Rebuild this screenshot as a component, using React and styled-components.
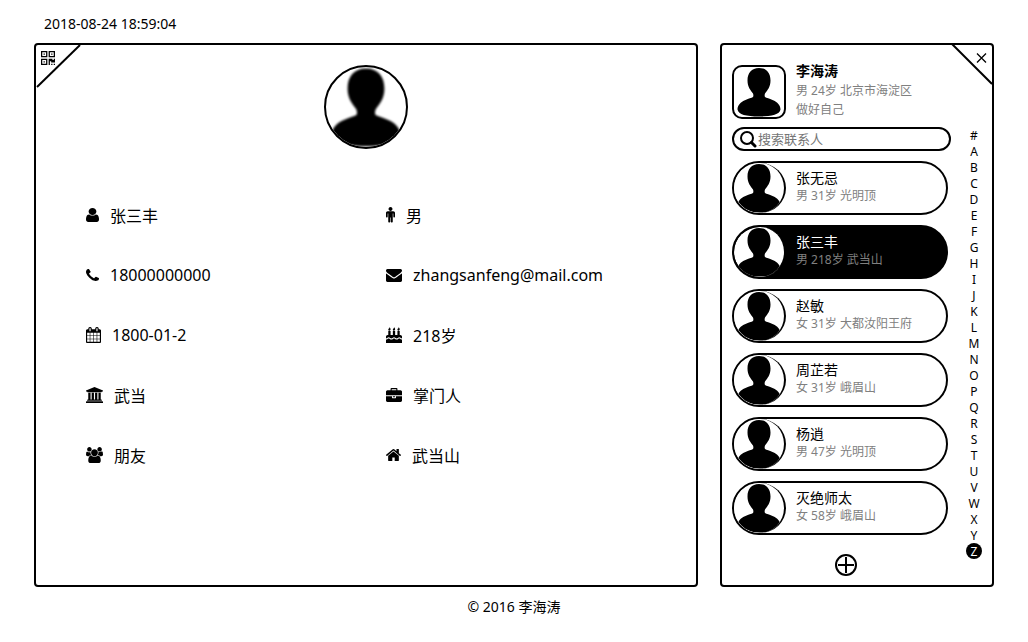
import React, { useState } from "react";
import styled, { createGlobalStyle } from "styled-components";

const GlobalStyle = createGlobalStyle`
  *, *::before, *::after { box-sizing: border-box; }
  body {
    margin: 0;
    background: #fff;
    color: #000;
    font-family: "Noto Sans", "Noto Sans CJK SC", sans-serif;
    font-size: 14px;
  }
  button, input { font: inherit; color: inherit; }
  ul { list-style: none; margin: 0; padding: 0; }
`;

const Page = styled.div`
  max-width: 1028px;
  margin: 0 auto;
  padding: 0 34px;
`;

const Header = styled.header`
  padding: 14px 10px 9px;
  line-height: 20px;
`;

const Columns = styled.main`
  display: grid;
  grid-template-columns: minmax(0, 1fr) 274px;
  gap: 22px;
`;

const Panel = styled.section`
  position: relative;
  border: 2px solid #000;
  border-radius: 4px;
`;

const DetailPanel = styled(Panel)`
  padding: 20px 10px 20px 50px;
`;

const SidePanel = styled(Panel)`
  display: grid;
  grid-template-columns: minmax(0, 1fr) 28px;
  padding: 20px 4px 9px 10px;
`;

const CornerButton = styled.button`
  position: absolute;
  top: 0;
  ${(p) => (p.$side === "left" ? "left: 0;" : "right: 0;")}
  display: block;
  padding: 0;
  border: 0;
  background: none;
  cursor: pointer;

  svg { display: block; }
`;

const Portrait = styled.svg`
  display: block;
  flex: none;
  width: ${(p) => p.$size}px;
  height: ${(p) => p.$size}px;
  border: 2px solid #000;
  border-radius: ${(p) => (p.$round ? "50%" : "10px")};
  background: #fff;
`;

const PillPortrait = styled.svg`
  display: block;
  flex: none;
  width: 52px;
  height: 50px;
  border-right: 2px solid #000;
  border-radius: 50%;
  background: #fff;
`;

const PortraitRow = styled.div`
  display: flex;
  justify-content: center;
  padding-right: 40px;
  margin-bottom: 36px;
`;

const Facts = styled.ul`
  display: grid;
  grid-template-columns: 1fr 1fr;
`;

const Fact = styled.li`
  display: flex;
  align-items: center;
  gap: 11px;
  height: 60px;
  font-size: 16px;
`;

const Profile = styled.div`
  display: flex;
  gap: 10px;
  margin-bottom: 8px;
`;

const ProfileText = styled.div`
  margin-top: -4px;
`;

const ProfileName = styled.h2`
  margin: 0;
  font-size: 14px;
  line-height: 20px;
  font-weight: 700;
`;

const Muted = styled.div`
  color: #808080;
  font-size: 12px;
  line-height: ${(p) => (p.$loose ? "19px" : "16px")};
`;

const Search = styled.label`
  display: flex;
  align-items: center;
  gap: 1px;
  height: 24px;
  margin: 0 9px 10px 0;
  padding-left: 5px;
  border: 2px solid #000;
  border-radius: 12px;

  svg { flex: none; }
`;

const SearchInput = styled.input`
  flex: 1;
  min-width: 0;
  height: 20px;
  padding: 0;
  border: 0;
  outline: 0;
  background: none;
  font-size: 13px;

  &::placeholder { color: #757575; opacity: 1; }
`;

const ContactList = styled.ul`
  display: grid;
  gap: 10px;
  margin: 0 12px 19px 0;
`;

const ContactButton = styled.button`
  display: flex;
  align-items: center;
  gap: 10px;
  width: 100%;
  height: 54px;
  padding: 0;
  overflow: hidden;
  border: 2px solid #000;
  border-radius: 27px;
  background: ${(p) => (p.$active ? "#000" : "#fff")};
  color: ${(p) => (p.$active ? "#fff" : "#000")};
  text-align: left;
  cursor: pointer;
`;

const ContactText = styled.div`
  padding-bottom: 4px;
`;

const ContactName = styled.div`
  font-size: 14px;
  line-height: 20px;
`;

const AddButton = styled.button`
  display: block;
  width: 22px;
  height: 22px;
  margin: 0 auto;
  padding: 0;
  border: 0;
  background: none;
  cursor: pointer;

  svg { display: block; }
`;

const Letters = styled.nav`
  display: flex;
  flex-direction: column;
  align-items: center;
  padding-top: 62px;
`;

const Letter = styled.a`
  width: 16px;
  height: 16px;
  border-radius: 50%;
  background: ${(p) => (p.$active ? "#000" : "none")};
  color: ${(p) => (p.$active ? "#fff" : "#000")};
  font-size: 12px;
  line-height: 18px;
  text-align: center;
  text-decoration: none;
`;

const Footer = styled.footer`
  padding: 10px 0;
  line-height: 20px;
  text-align: center;
`;

const ICONS = {
  user: [13, 14, "256 128 1280 1536", "M1536 1399q0 109-62.5 187t-150.5 78h-854q-88 0-150.5-78t-62.5-187q0-85 8.5-160.5t31.5-152 58.5-131 94-89 134.5-34.5q131 128 313 128t313-128q76 0 134.5 34.5t94 89 58.5 131 31.5 152 8.5 160.5zm-256-887q0 159-112.5 271.5t-271.5 112.5-271.5-112.5-112.5-271.5 112.5-271.5 271.5-112.5 271.5 112.5 112.5 271.5z"],
  phone: [13, 12, "192 128 1408 1408", "M1600 1240q0 27-10 70.5t-21 68.5q-21 50-122 106-94 51-186 51-27 0-53-3.5t-57.5-12.5-47-14.5-55.5-20.5-49-18q-98-35-175-83-127-79-264-216t-216-264q-48-77-83-175-3-9-18-49t-20.5-55.5-14.5-47-12.5-57.5-3.5-53q0-92 51-186 56-101 106-122 25-11 68.5-21t70.5-10q14 0 21 3 18 6 53 76 11 19 30 54t35 63.5 31 53.5q3 4 17.5 25t21.5 35.5 7 28.5q0 20-28.5 50t-62 55-62 53-28.5 46q0 9 5 22.5t8.5 20.5 14 24 11.5 19q76 137 174 235t235 174q2 1 19 11.5t24 14 20.5 8.5 22.5 5q18 0 46-28.5t53-62 55-62 50-28.5q14 0 28.5 7t35.5 21.5 25 17.5q25 15 53.5 31t63.5 35 54 30q70 35 76 53 3 7 3 21z"],
  calendar: [15, 16, "64 0 1664 1792", "M192 1664h288v-288h-288v288zm352 0h320v-288h-320v288zm-352-352h288v-320h-288v320zm352 0h320v-320h-320v320zm-352-384h288v-288h-288v288zm736 736h320v-288h-320v288zm-384-736h320v-288h-320v288zm768 736h288v-288h-288v288zm-384-352h320v-320h-320v320zm-352-864v-288q0-13-9.5-22.5t-22.5-9.5h-64q-13 0-22.5 9.5t-9.5 22.5v288q0 13 9.5 22.5t22.5 9.5h64q13 0 22.5-9.5t9.5-22.5zm736 864h288v-320h-288v320zm-384-384h320v-288h-320v288zm384 0h288v-288h-288v288zm32-480v-288q0-13-9.5-22.5t-22.5-9.5h-64q-13 0-22.5 9.5t-9.5 22.5v288q0 13 9.5 22.5t22.5 9.5h64q13 0 22.5-9.5t9.5-22.5zm384-64v1280q0 52-38 90t-90 38h-1408q-52 0-90-38t-38-90v-1280q0-52 38-90t90-38h128v-96q0-66 47-113t113-47h64q66 0 113 47t47 113v96h384v-96q0-66 47-113t113-47h64q66 0 113 47t47 113v96h128q52 0 90 38t38 90z"],
  university: [17, 16, "0 0 1920 1792", "M960 0l960 384v128h-128q0 26-20.5 45t-48.5 19h-1526q-28 0-48.5-19t-20.5-45h-128v-128zm-704 640h256v768h128v-768h256v768h128v-768h256v768h128v-768h256v768h59q28 0 48.5 19t20.5 45v64h-1664v-64q0-26 20.5-45t48.5-19h59v-768zm1595 960q28 0 48.5 19t20.5 45v128h-1920v-128q0-26 20.5-45t48.5-19h1782z"],
  users: [17, 16, "0 0 1920 1792", "M593 896q-162 5-265 128h-134q-82 0-138-40.5t-56-118.5q0-353 124-353 6 0 43.5 21t97.5 42.5 119 21.5q67 0 133-23-5 37-5 66 0 159 81 288zm1071 637q0 120-73 189.5t-194 69.5h-874q-121 0-194-69.5t-73-189.5q0-53 3.5-103.5t14-109 26.5-108.5 43-97.5 62-81 85.5-53.5 111.5-20q10 0 43 21.5t73 48 107 48 135 21.5 135-21.5 107-48 73-48 43-21.5q61 0 111.5 20t85.5 53.5 62 81 43 97.5 26.5 108.5 14 109 3.5 103.5zm-1024-1277q0 106-75 181t-181 75-181-75-75-181 75-181 181-75 181 75 75 181zm704 384q0 159-112.5 271.5t-271.5 112.5-271.5-112.5-112.5-271.5 112.5-271.5 271.5-112.5 271.5 112.5 112.5 271.5zm576 225q0 78-56 118.5t-138 40.5h-134q-103-123-265-128 81-129 81-288 0-29-5-66 66 23 133 23 59 0 119-21.5t97.5-42.5 43.5-21q124 0 124 353zm-128-609q0 106-75 181t-181 75-181-75-75-181 75-181 181-75 181 75 75 181z"],
  male: [9, 16, "384 -32 1024 1824", "M1408 640v416q0 40-28 68t-68 28-68-28-28-68v-352h-64v912q0 46-33 79t-79 33-79-33-33-79v-464h-64v464q0 46-33 79t-79 33-79-33-33-79v-912h-64v352q0 40-28 68t-68 28-68-28-28-68v-416q0-80 56-136t136-56h640q80 0 136 56t56 136zm-288-448q0 93-65.5 158.5t-158.5 65.5-158.5-65.5-65.5-158.5 65.5-158.5 158.5-65.5 158.5 65.5 65.5 158.5z"],
  envelope: [16, 13, "0 256 1792 1408", "M1792 710v794q0 66-47 113t-113 47h-1472q-66 0-113-47t-47-113v-794q44 49 101 87 362 246 497 345 57 42 92.5 65.5t94.5 48 110 24.5h2q51 0 110-24.5t94.5-48 92.5-65.5q170-123 498-345 57-39 100-87zm0-294q0 79-49 151t-122 123q-376 261-468 325-10 7-42.5 30.5t-54 38-52 32.5-57.5 27-50 9h-2q-23 0-50-9t-57.5-27-52-32.5-54-38-42.5-30.5q-91-64-262-182.5t-205-142.5q-62-42-117-115.5t-55-136.5q0-78 41.5-130t118.5-52h1472q65 0 112.5 47t47.5 113z"],
  cake: [16, 16, "0 0 1792 1792", "M1792 1408v384h-1792v-384q45 0 85-14t59-27.5 47-37.5q30-27 51.5-38t56.5-11q24 0 44 7t31 15 33 27q29 25 47 38t58 27 86 14q45 0 85-14.5t58-27 48-37.5q21-19 32.5-27t31-15 43.5-7q35 0 56.5 11t51.5 38q28 24 47 37.5t59 27.5 85 14 85-14 59-27.5 47-37.5q30-27 51.5-38t56.5-11q34 0 55.5 11t51.5 38q28 24 47 37.5t59 27.5 85 14zm0-320v192q-24 0-44-7t-31-15-33-27q-29-25-47-38t-58-27-85-14q-46 0-86 14t-58 27-47 38q-22 19-33 27t-31 15-44 7q-35 0-56.5-11t-51.5-38q-29-25-47-38t-58-27-86-14q-45 0-85 14.5t-58 27-48 37.5q-21 19-32.5 27t-31 15-43.5 7q-35 0-56.5-11t-51.5-38q-28-24-47-37.5t-59-27.5-85-14q-46 0-86 14t-58 27-47 38q-30 27-51.5 38t-56.5 11v-192q0-80 56-136t136-56h64v-448h256v448h256v-448h256v448h256v-448h256v448h64q80 0 136 56t56 136zM512 256q0 77-36 118.5t-92 41.5q-53 0-90.5-37.5t-37.5-90.5q0-29 9.5-51t23.5-34 31-28 31-31.5 23.5-44.5 9.5-67q38 0 83 74t45 150zM1024 256q0 77-36 118.5t-92 41.5q-53 0-90.5-37.5t-37.5-90.5q0-29 9.5-51t23.5-34 31-28 31-31.5 23.5-44.5 9.5-67q38 0 83 74t45 150zM1536 256q0 77-36 118.5t-92 41.5q-53 0-90.5-37.5t-37.5-90.5q0-29 9.5-51t23.5-34 31-28 31-31.5 23.5-44.5 9.5-67q38 0 83 74t45 150z"],
  briefcase: [16, 14, "0 0 1792 1536", "M640 256h512v-128h-512v128zm1152 640v480q0 66-47 113t-113 47h-1472q-66 0-113-47t-47-113v-480h672v160q0 26 19 45t45 19h320q26 0 45-19t19-45v-160h672zm-768 0v128h-256v-128h256zm768-480v384h-1792v-384q0-66 47-113t113-47h352v-160q0-40 28-68t68-28h576q40 0 68 28t28 68v160h352q66 0 113 47t47 113z"],
  home: [15, 12, "89 253 1614 1283", "M1472 992v480q0 26-19 45t-45 19h-384v-384h-256v384h-384q-26 0-45-19t-19-45v-480q0-1 .5-3t.5-3l575-474 575 474q1 2 1 6zm223-69l-62 74q-8 9-21 11h-3q-13 0-21-7l-692-577-692 577q-12 8-24 7-13-2-21-11l-62-74q-8-10-7-23.5t11-21.5l719-599q32-26 76-26t76 26l244 204v-195q0-14 9-23t23-9h192q14 0 23 9t9 23v408l219 182q10 8 11 21.5t-7 23.5z"],
};

const QR_PATH = "M576 1152v128h-128v-128h128zm0-768v128h-128v-128h128zm768 0v128h-128v-128h128zm-1024 1023h384v-383h-384v383zm0-767h384v-384h-384v384zm768 0h384v-384h-384v384zm-256 256v640h-640v-640h640zm512 512v128h-128v-128h128zm256 0v128h-128v-128h128zm0-512v384h-384v-128h-128v384h-128v-640h384v128h128v-128h128zm-768-768v640h-640v-640h640zm768 0v640h-640v-640h640z";

function Icon({ name }) {
  const [width, height, viewBox, d] = ICONS[name];
  return (
    <svg width={width} height={height} viewBox={viewBox} preserveAspectRatio="none" aria-hidden="true">
      <path d={d} />
    </svg>
  );
}

function Silhouette({ as: Frame, ...rest }) {
  return (
    <Frame viewBox="0 0 100 100" aria-hidden="true" {...rest}>
      <path
        filter="url(#soft-edge)"
        d="M50 2C65 2 73 12 73 27C73 40 67 46 62 53C61 56 61 58 62 60C65 62 71 63 77 66C87 70 93 77 93 85C91 95 76 99 50 99C24 99 9 95 7 85C7 77 13 70 23 66C29 63 35 62 38 60C39 58 39 56 38 53C33 46 27 40 27 27C27 12 35 2 50 2Z"
      />
    </Frame>
  );
}

const FACTS = [
  ["user", "张三丰"],
  ["male", "男"],
  ["phone", "18000000000"],
  ["envelope", "zhangsanfeng@mail.com"],
  ["calendar", "1800-01-2"],
  ["cake", "218岁"],
  ["university", "武当"],
  ["briefcase", "掌门人"],
  ["users", "朋友"],
  ["home", "武当山"],
];

const CONTACTS = [
  ["张无忌", "男 31岁 光明顶"],
  ["张三丰", "男 218岁 武当山"],
  ["赵敏", "女 31岁 大都汝阳王府"],
  ["周芷若", "女 31岁 峨眉山"],
  ["杨逍", "男 47岁 光明顶"],
  ["灭绝师太", "女 58岁 峨眉山"],
];

const LETTERS = "#ABCDEFGHIJKLMNOPQRSTUVWXYZ".split("");

export default function App() {
  const [selected, setSelected] = useState("张三丰");
  const [letter, setLetter] = useState("Z");

  return (
    <Page>
      <GlobalStyle />
      <Header>
        <time dateTime="2018-08-24T18:59:04">2018-08-24 18:59:04</time>
      </Header>
      <Columns>
        <DetailPanel>
          <CornerButton $side="left" type="button" aria-label="二维码">
            <svg width="46" height="44" viewBox="0 0 46 44">
              <filter id="soft-edge">
                <feGaussianBlur stdDeviation="1" />
              </filter>
              <path d="M1 42L44 0" stroke="#000" strokeWidth="2" />
              <svg x="5" y="6" width="14" height="14" viewBox="192 128 1408 1408">
                <path d={QR_PATH} />
              </svg>
            </svg>
          </CornerButton>
          <PortraitRow>
            <Silhouette as={Portrait} $size={84} $round />
          </PortraitRow>
          <Facts>
            {FACTS.map(([icon, text]) => (
              <Fact key={icon}>
                <Icon name={icon} />
                <span>{text}</span>
              </Fact>
            ))}
          </Facts>
        </DetailPanel>
        <SidePanel>
          <CornerButton $side="right" type="button" aria-label="关闭">
            <svg width="42" height="40" viewBox="0 0 42 40" fill="none" stroke="#000">
              <path d="M2 -1L42 39" strokeWidth="2" />
              <path d="M27 8.500L36 17.500M36 8.500L27 17.500" strokeWidth="1.300" />
            </svg>
          </CornerButton>
          <div>
            <Profile>
              <Silhouette as={Portrait} $size={54} />
              <ProfileText>
                <ProfileName>李海涛</ProfileName>
                <Muted $loose>男 24岁 北京市海淀区</Muted>
                <Muted $loose>做好自己</Muted>
              </ProfileText>
            </Profile>
            <Search>
              <svg width="18" height="18" viewBox="0 0 18 18" fill="none" stroke="#000" aria-hidden="true">
                <circle cx="8" cy="8" r="6" strokeWidth="2" />
                <path d="M12.500 12.500L16 16" strokeWidth="3" strokeLinecap="round" />
              </svg>
              <SearchInput type="text" placeholder="搜索联系人" aria-label="搜索联系人" />
            </Search>
            <ContactList>
              {CONTACTS.map(([name, info]) => (
                <li key={name}>
                  <ContactButton type="button" $active={name === selected} onClick={() => setSelected(name)}>
                    <Silhouette as={PillPortrait} />
                    <ContactText>
                      <ContactName>{name}</ContactName>
                      <Muted>{info}</Muted>
                    </ContactText>
                  </ContactButton>
                </li>
              ))}
            </ContactList>
            <AddButton type="button" aria-label="添加联系人">
              <svg width="22" height="22" viewBox="0 0 22 22" fill="none" stroke="#000" strokeWidth="2">
                <circle cx="11" cy="11" r="10" />
                <path d="M11 3V19M3 11H19" />
              </svg>
            </AddButton>
          </div>
          <Letters aria-label="索引">
            {LETTERS.map((l) => (
              <Letter key={l} href={`#${l}`} $active={l === letter} onClick={() => setLetter(l)}>
                {l}
              </Letter>
            ))}
          </Letters>
        </SidePanel>
      </Columns>
      <Footer>© 2016 李海涛</Footer>
    </Page>
  );
}
